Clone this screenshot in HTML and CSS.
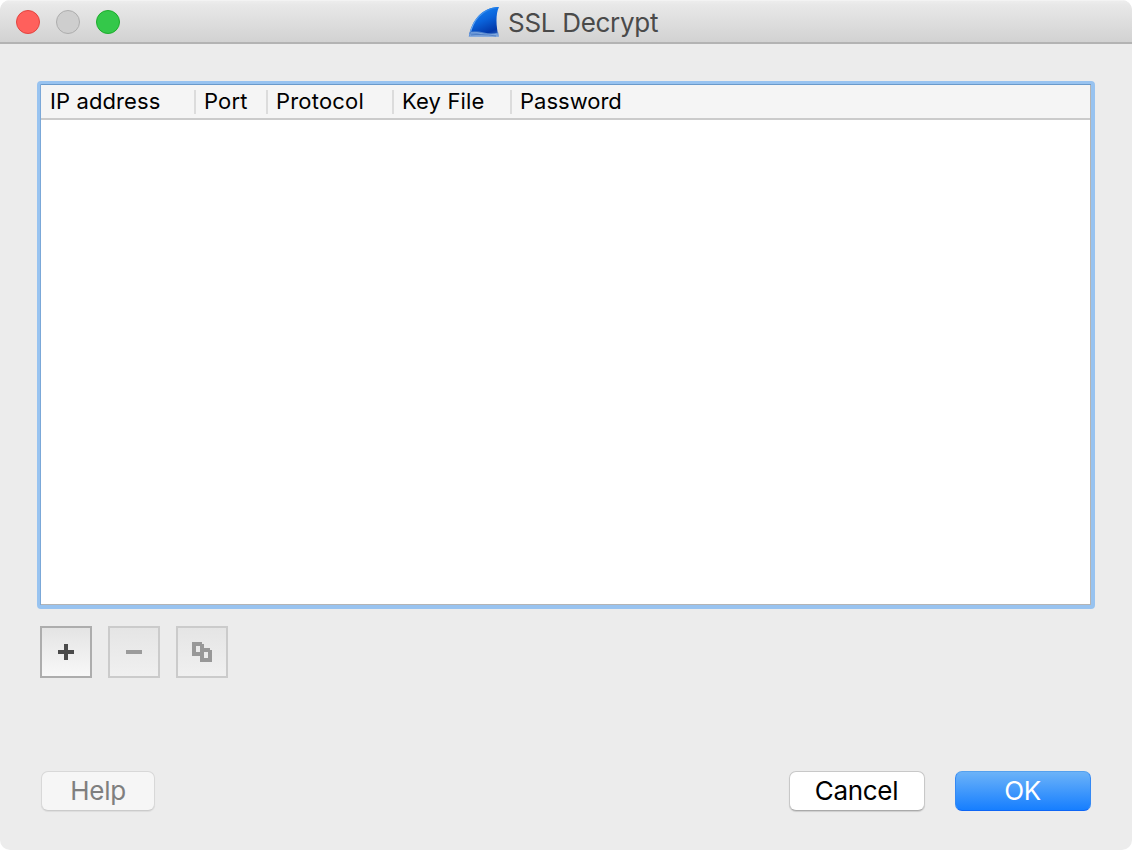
FILE: index.html
```html
<!DOCTYPE html>
<html lang="en">
<head>
<meta charset="utf-8">
<title>SSL Decrypt</title>
<link rel="stylesheet" href="styles.css">
</head>
<body>
<div class="window">
  <header class="titlebar">
    <div class="lights"><span class="light close"></span><span class="light minimize"></span><span class="light zoom"></span></div>
    <div class="title">
      <svg class="fin" width="32" height="32" viewBox="0 0 32 32">
        <defs>
          <linearGradient id="body" x1="0.3" y1="0" x2="0.75" y2="1"><stop offset="0" stop-color="#1684f2"/><stop offset="0.45" stop-color="#0a62da"/><stop offset="0.85" stop-color="#0338a8"/><stop offset="1" stop-color="#2458b8"/></linearGradient>
          <linearGradient id="edge" x1="1" y1="0" x2="0" y2="1"><stop offset="0" stop-color="#1878e8"/><stop offset="1" stop-color="#82b8f2"/></linearGradient>
          <linearGradient id="water" x1="0" y1="0" x2="0" y2="1"><stop offset="0" stop-color="#3c74c8"/><stop offset="1" stop-color="#8eb0de"/></linearGradient>
        </defs>
        <path d="M0.800 30.500C3.500 15.500 13 1.500 31 1C27.500 8 28 20 30.600 30.500Z" fill="url(#body)"/>
        <path d="M1.800 29C4.500 15 14 2.500 30 1.600" fill="none" stroke="url(#edge)" stroke-width="1.200"/>
        <path d="M2.300 25.500Q9 24.500 16 26.500T30.300 26.500L30.800 31H0.800Z" fill="url(#water)"/>
        <path d="M3 26.800Q9 25.800 15 28T29.500 28" fill="none" stroke="#a9c6ea" stroke-width="0.700" opacity="0.700"/>
        <path d="M3 29Q12 27.500 28 30" fill="none" stroke="#4273bd" stroke-width="0.700"/>
      </svg>
      <span class="title-text">SSL Decrypt</span>
    </div>
  </header>
  <main class="content">
    <section class="table">
      <div class="table-head">
        <div class="col col-ip">IP address</div>
        <div class="col col-port">Port</div>
        <div class="col col-protocol">Protocol</div>
        <div class="col col-key">Key File</div>
        <div class="col col-password">Password</div>
      </div>
    </section>
    <div class="tools">
      <button class="tool" aria-label="Add"><svg width="48" height="48"><path d="M22 16h4v6h6v4h-6v6h-4v-6h-6v-4h6z" fill="#4b4b4b"/></svg></button>
      <button class="tool disabled" aria-label="Remove"><svg width="48" height="48"><path d="M16 22h16v4H16z" fill="#9b9b9b"/></svg></button>
      <button class="tool disabled" aria-label="Copy"><svg width="48" height="48"><path fill-rule="evenodd" d="M14 14h10v2h2v4h6v2h2v12H22v-6h-8zM18 18v6h4v-6zM26 24v6h4v-6z" fill="#989898"/></svg></button>
    </div>
    <footer class="actions">
      <button class="btn help">Help</button>
      <button class="btn cancel">Cancel</button>
      <button class="btn ok">OK</button>
    </footer>
  </main>
</div>
</body>
</html>
```
FILE: styles.css
```css
* { box-sizing: border-box; }
body { margin: 0; background: #fff; font-family: Inter, "Liberation Sans", sans-serif; color: #000; }
.window { width: 1132px; height: 850px; background: #ececec; border-radius: 10px; overflow: hidden; }
.titlebar { display: grid; grid-template-columns: 468px auto; align-items: center; height: 44px; background: linear-gradient(#ededed, #e8e8e8 4px, #d2d2d2); border-bottom: 2px solid #b3b3b3; border-top: 1px solid #f3f3f3; }
.lights { display: flex; gap: 16px; padding-left: 16px; padding-top: 1px; }
.light { width: 24px; height: 24px; border-radius: 50%; border: 1px solid; }
.close { background: #ff605c; border-color: #e2443f; }
.minimize { background: #cecece; border-color: #adadad; }
.zoom { background: #34c84a; border-color: #1dac2c; }
.title { display: flex; align-items: center; gap: 8px; padding-top: 2px; }
.fin { display: block; margin-bottom: 2px; }
.title-text { font-size: 26px; line-height: 32px; letter-spacing: -0.3px; color: #4a4a4a; white-space: nowrap; }
.content { padding: 37px 37px 0; }
.table { height: 528px; border: 3px solid #98c3f0; border-right-width: 4px; border-bottom-width: 4px; border-radius: 4px; background: #fff; box-shadow: inset 1px 0 #7ba8d8, inset 0 1px #6a9acb, inset -1px -1px #b4b4b4; padding: 1px; }
.table-head { display: flex; height: 35px; padding-top: 5px; background: #f5f5f5; border-bottom: 2px solid #cbcbcb; font-size: 22px; line-height: 22px; letter-spacing: 0.15px; }
.col { height: 24px; padding-left: 9px; border-right: 2px solid #dcdcdc; white-space: nowrap; }
.col-ip { width: 155px; letter-spacing: 0.1px; }
.col-port { width: 72px; padding-left: 8px; }
.col-protocol { width: 126px; padding-left: 8px; letter-spacing: 0.2px; }
.col-key { width: 118px; padding-left: 8px; }
.col-password { padding-left: 8px; border: 0; letter-spacing: 0; }
button { padding: 0; font-family: inherit; }
.tools { display: flex; gap: 16px; padding: 17px 3px 0; }
.tool { width: 52px; height: 52px; border: 2px solid #adadad; background: linear-gradient(#e4e4e4, #f8f8f8); }
.tool svg { display: block; }
.disabled { border-color: #cbcbcb; background: linear-gradient(#e5e5e5, #f0f0f0); }
.actions { display: flex; padding: 93px 4px 0; }
.btn { height: 40px; border: 1px solid; border-radius: 7px; font-size: 26px; line-height: 36px; letter-spacing: -0.3px; }
.help { width: 114px; margin-right: auto; color: #7f7f7f; background: #f6f6f6; border-color: #d8d8d8; border-bottom-color: #cbcbcb; box-shadow: 0 1px 1px #0001; }
.cancel { width: 136px; margin-right: 30px; padding-right: 1px; color: #000; background: #fff; border-color: #c8c8c8; border-bottom-color: #aaa; box-shadow: 0 1px 1px #0002; }
.ok { width: 136px; padding-right: 1px; color: #fff; background: linear-gradient(#6eb4f8, #147dff) border-box; border-color: #55a1ee #3489f4 #0d65f5; }
```
